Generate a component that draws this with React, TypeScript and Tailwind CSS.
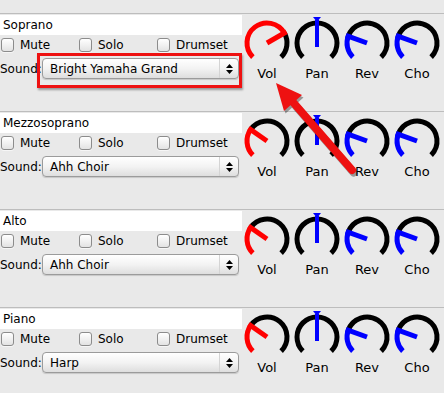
import React from 'react';

type Track = {
  name: string;
  sound: string;
  vol: number;
};

const tracks: Track[] = [
  { name: 'Soprano', sound: 'Bright Yamaha Grand', vol: 60 },
  { name: 'Mezzosoprano', sound: 'Ahh Choir', vol: -55 },
  { name: 'Alto', sound: 'Ahh Choir', vol: -55 },
  { name: 'Piano', sound: 'Harp', vol: -55 },
];

const CX = 25;
const CY = 27;
const R = 20;

// angle in degrees, 0 = top, clockwise positive
function pt(deg: number, r = R): [number, number] {
  const a = (deg * Math.PI) / 180;
  return [CX + r * Math.sin(a), CY - r * Math.cos(a)];
}

function arc(from: number, to: number) {
  const [x1, y1] = pt(from);
  const [x2, y2] = pt(to);
  const large = to - from > 180 ? 1 : 0;
  return `M ${x1} ${y1} A ${R} ${R} 0 ${large} 1 ${x2} ${y2}`;
}

function Knob({ value, color, pan }: { value: number; color: string; pan?: boolean }) {
  const [px, py] = pt(value, R + 2.5);
  return (
    <svg width="50" height="46" viewBox="0 0 50 46">
      {pan ? (
        <>
          <path d={arc(-135, 135)} fill="none" stroke="#000" strokeWidth="5" />
          <line x1={CX} y1={CY + 4} x2={CX} y2={4} stroke={color} strokeWidth="4" />
          <polygon points="21,1 29,1 25,6" fill={color} />
        </>
      ) : (
        <>
          <path d={arc(value, 135)} fill="none" stroke="#000" strokeWidth="5" />
          <path d={arc(-135, value)} fill="none" stroke={color} strokeWidth="5" />
          <line x1={CX} y1={CY} x2={px} y2={py} stroke={color} strokeWidth="5" />
        </>
      )}
    </svg>
  );
}

function Checkbox({ label }: { label: string }) {
  return (
    <div className="flex items-center gap-[6px] w-[78px] pl-[1px]">
      <span className="block w-[13px] h-[14px] rounded-[3px] border border-[#8c8c8c] bg-gradient-to-b from-white to-[#e3e3e3] shadow-[0_1px_0_rgba(255,255,255,0.6)]" />
      <span>{label}</span>
    </div>
  );
}

function TrackRow({ track }: { track: Track }) {
  return (
    <div className="flex h-[98px] border-t border-[#bdbdbd]">
      <div className="w-[242px] pt-[1px]">
        <div className="h-[20px] bg-white pl-[3px] flex items-center">{track.name}</div>
        <div className="flex h-[20px] items-center">
          <Checkbox label="Mute" />
          <Checkbox label="Solo" />
          <Checkbox label="Drumset" />
        </div>
        <div className="flex items-center mt-[3px] h-[21px]">
          <span className="w-[42px] whitespace-nowrap">Sound:</span>
          <div className="flex items-center w-[197px] h-[21px] rounded-[4px] border border-[#9b9b9b] bg-gradient-to-b from-white via-[#f3f3f3] to-[#dedede] shadow-[0_1px_1px_rgba(0,0,0,0.15)]">
            <span className="flex-1 pl-[7px] leading-none">{track.sound}</span>
            <div className="w-[19px] h-full border-l border-[#d4d4d4] flex flex-col items-center justify-center gap-[2px]">
              <svg width="7" height="4" viewBox="0 0 7 4">
                <polygon points="0,4 7,4 3.5,0" fill="#000" />
              </svg>
              <svg width="7" height="4" viewBox="0 0 7 4">
                <polygon points="0,0 7,0 3.5,4" fill="#000" />
              </svg>
            </div>
          </div>
        </div>
      </div>
      <div className="flex text-[13px]">
        {[
          { label: 'Vol', value: track.vol, color: '#ff0000' },
          { label: 'Pan', value: 0, color: '#0000ff', pan: true },
          { label: 'Rev', value: -70, color: '#0000ff' },
          { label: 'Cho', value: -70, color: '#0000ff' },
        ].map((k) => (
          <div key={k.label} className="w-[50px] flex flex-col items-center">
            <div className="mt-[2px]">
              <Knob value={k.value} color={k.color} pan={k.pan} />
            </div>
            <span className="mt-[4px] leading-[15px]">{k.label}</span>
          </div>
        ))}
      </div>
    </div>
  );
}

export default function App() {
  return (
    <div
      className="relative w-[444px] h-[393px] overflow-hidden bg-[#e9e9e9] text-[12px] text-black"
      style={{ fontFamily: '"DejaVu Sans", Verdana, sans-serif' }}
    >
      <div className="h-[13px]" />
      {tracks.map((t) => (
        <TrackRow key={t.name} track={t} />
      ))}

      {/* annotation: highlight box + arrow */}
      <div className="absolute left-[37px] top-[53px] w-[205px] h-[35px] border-[3px] border-[#ee1111] shadow-[1px_2px_2px_rgba(0,0,0,0.35)]" />
      <svg className="absolute left-0 top-0" width="444" height="393" viewBox="0 0 444 393">
        <g opacity="0.35" transform="translate(1.5,2.5)">
          <line x1="352" y1="170" x2="292" y2="101" stroke="#000" strokeWidth="8" strokeLinecap="round" />
          <polygon points="276,83 302,95 284,111" fill="#000" />
        </g>
        <line x1="352" y1="170" x2="292" y2="101" stroke="#ee1111" strokeWidth="8" strokeLinecap="round" />
        <polygon points="276,83 302,95 284,111" fill="#ee1111" />
      </svg>
    </div>
  );
}
